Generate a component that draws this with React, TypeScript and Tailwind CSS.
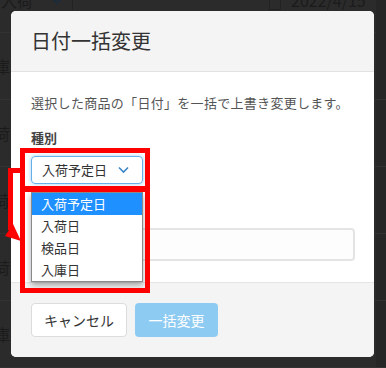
import React from 'react';

const font = { fontFamily: '"Noto Sans CJK JP", "Noto Sans", sans-serif' };

const App: React.FC = () => {
  const bgRows = ['庫', '荷', '荷', '荷', '庫'];
  const options = ['入荷予定日', '入荷日', '検品日', '入庫日'];

  return (
    <div className="relative w-[386px] h-[368px] overflow-hidden bg-[#2b2b2b]" style={font}>
      {/* dimmed page behind the modal */}
      <div className="flex flex-col -mt-[10px]">
        <div className="h-[43px] flex items-start border-b border-[#323232] text-[#1b1b1b]">
          <span className="text-[16px] leading-[20px] pl-[1px] w-[50px]">入荷</span>
          <svg width="14" height="14" viewBox="0 0 14 14" className="mt-[4px]">
            <path d="M2 4 L7 9 L12 4" stroke="#1d2b3a" strokeWidth="2" fill="none" />
          </svg>
          <div className="ml-[8px] w-px h-[20px] bg-[#222]" />
          <div className="ml-[196px] w-[12px] h-[20px] border border-[#222]" />
          <span className="ml-[10px] text-[16px] leading-[20px]">2022/4/15</span>
          <div className="ml-auto w-[10px] h-[43px] bg-[#262626]" />
        </div>
        {bgRows.map((c, i) => (
          <div key={i} className="h-[67px] flex items-center border-b border-[#323232]">
            <span className="-ml-[6px] text-[16px] text-[#1b1b1b]">{c}</span>
            <div className="ml-auto w-[10px] h-full bg-[#262626]" />
          </div>
        ))}
      </div>

      {/* modal */}
      <div className="absolute left-[11px] top-[11px] w-[363px] h-[346px] rounded-[5px] overflow-hidden bg-white flex flex-col">
        <div className="h-[61px] shrink-0 bg-[#f4f4f4] border-b border-[#e2e2e2] px-[20px] flex items-center">
          <h1 className="text-[20px] text-[#333] leading-none">日付一括変更</h1>
        </div>
        <div className="h-[211px] shrink-0 pl-[20px] pr-[19px] pt-[21px] border-b border-[#e5e5e5] flex flex-col">
          <p className="text-[13px] leading-[20px] text-[#555] tracking-[0.3px]">
            選択した商品の「日付」を一括で上書き変更します。
          </p>
          <label className="mt-[15px] text-[13px] leading-[20px] font-bold text-[#444]">種別</label>
          <div className="mt-[8px] w-[112px] h-[28px] rounded-[4px] border border-[#66afe9] shadow-[0_0_4px_rgba(102,175,233,0.6)] flex items-center pl-[10px] pr-[13px] text-[13px] text-[#333]">
            <span>入荷予定日</span>
            <svg width="11" height="8" viewBox="0 0 11 8" className="ml-auto">
              <path d="M1 1.5 L5.5 6 L10 1.5" stroke="#3a86c8" strokeWidth="1.6" fill="none" />
            </svg>
          </div>
          {/* label for the date field sits under the open list */}
          <div className="mt-[14px] h-[20px]" />
          <div className="mt-[10px] h-[33px] rounded-[4px] border-2 border-[#e4e4e4] bg-[#fdfdfd]" />
        </div>
        <div className="flex-1 bg-[#f4f4f4] px-[20px] pt-[20px] flex gap-[8px] items-start">
          <button className="h-[34px] w-[96px] rounded-[4px] border border-[#dcdcdc] bg-white text-[14px] text-[#333]">
            キャンセル
          </button>
          <button className="h-[34px] w-[83px] rounded-[4px] bg-[#8ecbf2] text-[14px] text-white">
            一括変更
          </button>
        </div>
      </div>

      {/* open dropdown list */}
      <div className="absolute left-[31px] top-[192px] w-[112px] border border-[#8a8a8a] bg-white shadow-[0_3px_6px_rgba(0,0,0,0.35)] flex flex-col">
        {options.map((o, i) => (
          <div
            key={o}
            className={`h-[22px] pl-[9px] flex items-center text-[13px] ${i === 0 ? 'bg-[#1e90ff] text-white' : 'text-[#333]'}`}
          >
            {o}
          </div>
        ))}
      </div>

      {/* red annotations */}
      <div className="absolute left-[20px] top-[148px] w-[130px] h-[44px] border-[5px] border-[#ff0000]" />
      <div className="absolute left-[20px] top-[186px] w-[130px] h-[107px] border-[5px] border-[#ff0000]" />
      <svg className="absolute left-0 top-0" width="40" height="260" viewBox="0 0 40 260">
        <path d="M22 170.5 L10.5 170.5 L10.5 230" stroke="#ff0000" strokeWidth="5" fill="none" />
        <polygon points="5,236 13,224 21,241" fill="#ff0000" />
      </svg>
    </div>
  );
};

export default App;
